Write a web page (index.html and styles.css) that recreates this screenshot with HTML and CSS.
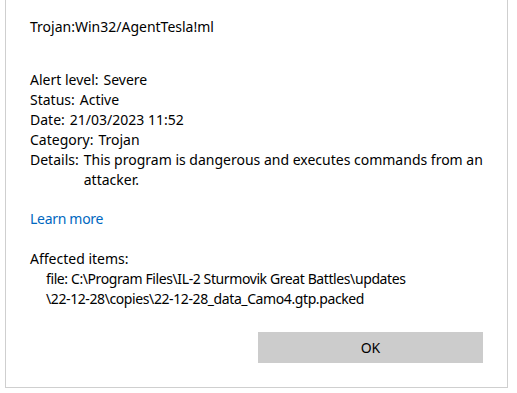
FILE: index.html
```html
<!DOCTYPE html>
<html lang="en">
<head>
    <meta charset="UTF-8">
    <meta name="viewport" content="width=device-width, initial-scale=1.0">
    <title>Threat details</title>
    <link rel="stylesheet" href="styles.css">
</head>
<body>
    <div class="panel">
        <div class="threat-name">Trojan:Win32/AgentTesla!ml</div>

        <div class="details">
            <div class="row"><span class="label">Alert level:</span><span class="value">Severe</span></div>
            <div class="row"><span class="label">Status:</span><span class="value">Active</span></div>
            <div class="row"><span class="label">Date:</span><span class="value">21/03/2023 11:52</span></div>
            <div class="row"><span class="label">Category:</span><span class="value">Trojan</span></div>
            <div class="row"><span class="label">Details:</span><span class="value">This program is dangerous and executes commands from an attacker.</span></div>
        </div>

        <a class="learn-more" href="#">Learn more</a>

        <div class="affected">
            <div class="affected-title">Affected items:</div>
            <div class="affected-item">file: C:\Program Files\IL-2 Sturmovik Great Battles\updates<br>\22-12-28\copies\22-12-28_data_Camo4.gtp.packed</div>
        </div>

        <div class="actions">
            <button class="ok-btn">OK</button>
        </div>
    </div>
</body>
</html>
```

FILE: styles.css
```css
* { margin: 0; padding: 0; box-sizing: border-box; }
body {
    font-family: "Noto Sans", "Open Sans", sans-serif;
    font-size: 14px;
    line-height: 20px;
    color: #000;
    background: #fff;
}
.panel {
    margin-left: 5px;
    width: 503px;
    height: 388px;
    border: 1px solid #cfcfcf;
    border-top: none;
    padding: 17px 24px 0 24px;
}
.threat-name { margin-bottom: 33px; }
.row { display: flex; gap: 5px; }
.label { flex: none; }
.value { flex: 1; }
.learn-more {
    display: inline-block;
    margin-top: 19px;
    color: #0067c0;
    text-decoration: none;
    letter-spacing: -0.3px;
}
.affected { margin-top: 20px; }
.affected-item {
    padding-left: 16px;
    letter-spacing: -0.4px;
}
.actions {
    display: flex;
    justify-content: flex-end;
    margin-top: 23px;
}
.ok-btn {
    width: 225px;
    height: 31px;
    background: #cccccc;
    border: none;
    font-family: inherit;
    font-size: 14px;
    color: #000;
}
```
